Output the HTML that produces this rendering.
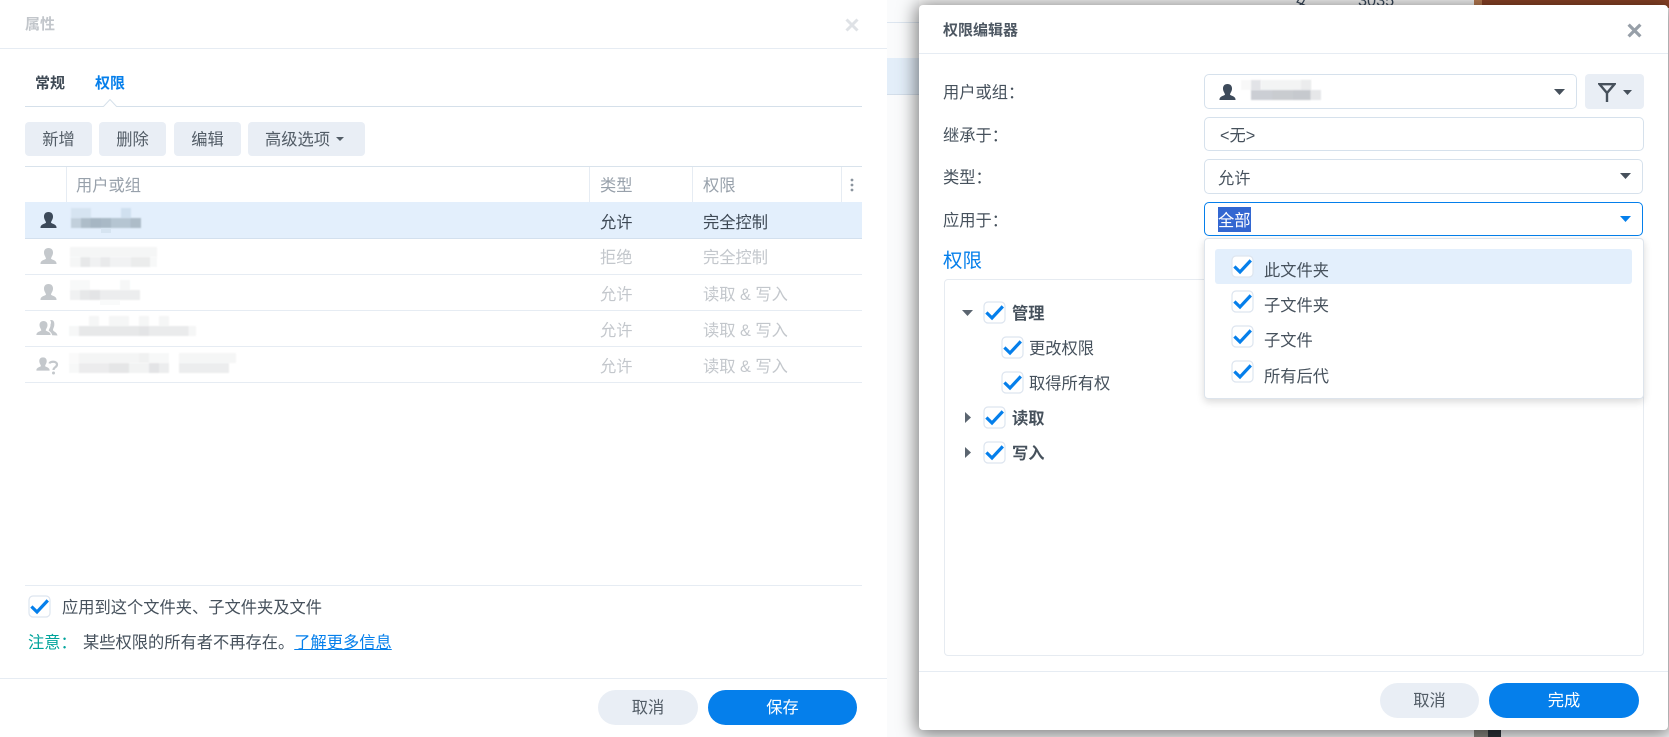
<!DOCTYPE html>
<html lang="zh-CN">
<head>
<meta charset="utf-8">
<title>权限编辑器</title>
<style>
html,body{margin:0;padding:0}
body{width:1669px;height:737px;overflow:hidden;position:relative;background:#fafbfc;font-family:"Liberation Sans","Noto Sans CJK SC",sans-serif;font-size:16.25px;color:#46515c}
div,span,svg,a{position:absolute;box-sizing:border-box}
.t{white-space:nowrap;line-height:24px;height:24px;margin-top:1px}
.dis{color:#c3c7cc}
.hd{color:#98a1ab}
.btn{background:#e9eef5;border-radius:4px;text-align:center;color:#525c66;line-height:36px;height:34px;top:122px}
.ln{background:#e6ecf3;height:1px}
.pill{border-radius:18px;text-align:center;line-height:36px;height:35px}
.gr{background:#e9eef5;color:#525c66}
.bl{background:#057feb;color:#fff}
.fld{border:1px solid #d6e1ec;border-radius:5px;background:#fff}
.cb{width:23px;height:23px}
.b{font-weight:700}
.bk{height:10px;filter:blur(.7px)}
</style>
</head>
<body>
<svg width="0" height="0" style="left:0;top:0">
<defs>
<symbol id="c" viewBox="0 0 23 23">
<rect x="1" y="1" width="21" height="21" rx="4" fill="#fff" stroke="#dde5ef" stroke-width="1.2"/>
<path d="M3.400 11.500L9 17 19.800 5.400" fill="none" stroke="#057feb" stroke-width="3.200"/>
</symbol>
<symbol id="p" viewBox="0 0 17 16">
<path d="M8.500 0C5.500 0 3.800 2 4 5 4.200 7.500 5.500 8.500 6 10.500 6 11.500 1 12 .5 15V16h16v-1C16 12 11 11.500 11 10.500 11.500 8.500 12.800 7.500 13 5 13.200 2 11.500 0 8.500 0Z"/>
</symbol>
</defs>
</svg>

<!-- underlying window -->
<div style="left:887px;top:22px;width:40px;height:1px;background:#dde6f0"></div>
<div style="left:887px;top:58px;width:40px;height:37px;background:#e3eef9;border-bottom:1px solid #d3deea"></div>
<div style="left:919px;top:0;width:555px;height:8px;background:#fff"></div>
<span class="t" style="left:1293px;top:-12px;color:#3a4a5c">安</span>
<span class="t" style="left:1358px;top:-12px;color:#3a4a5c">3035</span>
<div style="left:1474px;top:0;width:195px;height:8px;background:#8f4527"></div>
<div style="left:1474px;top:0;width:8px;height:8px;background:#c08055"></div>
<div style="left:1474px;top:728px;width:14px;height:9px;background:#8a8a82"></div>
<div style="left:1488px;top:728px;width:13px;height:9px;background:#2b3339"></div>

<!-- modal -->
<div style="left:919px;top:5px;width:749px;height:725px;background:#fff;border-radius:4px;box-shadow:0 2px 18px 3px rgba(0,0,0,.5)"></div>

<!-- left panel -->
<div style="left:0;top:0;width:887px;height:737px;background:#fff;z-index:1">
 <span class="t b" style="left:25px;top:12px;font-size:15px;color:#c2c6cb">属性</span>
 <svg style="left:845px;top:18px" width="14" height="14" viewBox="0 0 14 14"><path d="M1.500 1.500L12.500 12.500M12.500 1.500L1.500 12.500" stroke="#dfe2e6" stroke-width="3"/></svg>
 <div class="ln" style="left:0;top:48px;width:887px;height:1px"></div>

 <span class="t b" style="left:35px;top:71px;font-size:15px;color:#3f4a55">常规</span>
 <span class="t b" style="left:95px;top:71px;font-size:15px;color:#057feb">权限</span>
 <div style="left:25px;top:106px;width:837px;height:1px;background:#d5e0ea"></div>
 <svg style="left:103px;top:99px" width="14" height="8" viewBox="0 0 14 8"><path d="M0 8L7 .5 14 8" fill="#fff" stroke="#d5e0ea"/><path d="M1 7.500h12v1H1z" fill="#fff"/></svg>

 <div class="btn" style="left:25px;width:67px">新增</div>
 <div class="btn" style="left:99px;width:67px">删除</div>
 <div class="btn" style="left:174px;width:67px">编辑</div>
 <div class="btn" style="left:248px;width:117px;text-align:left;padding-left:17px">高级选项</div>
 <svg style="left:336px;top:137px" width="8" height="4"><path d="M0 0h8L4 4z" fill="#525c66"/></svg>

 <!-- table -->
 <div style="left:25px;top:166px;width:837px;height:1px;background:#d9e3ec"></div>
 <div class="ln" style="left:66px;top:167px;width:1px;height:35px"></div>
 <div class="ln" style="left:589px;top:167px;width:1px;height:35px"></div>
 <div class="ln" style="left:692px;top:167px;width:1px;height:35px"></div>
 <div class="ln" style="left:841px;top:167px;width:1px;height:35px"></div>
 <span class="t hd" style="left:76px;top:173px">用户或组</span>
 <span class="t hd" style="left:600px;top:173px">类型</span>
 <span class="t hd" style="left:703px;top:173px">权限</span>
 <svg style="left:850px;top:177px" width="4" height="16"><circle cx="2" cy="3" r="1.400" fill="#8b949e"/><circle cx="2" cy="8" r="1.400" fill="#8b949e"/><circle cx="2" cy="13" r="1.400" fill="#8b949e"/></svg>

 <div style="left:25px;top:202px;width:837px;height:37px;background:#e3effc;border-bottom:1px solid #d3e0ee"></div>
 <div class="ln" style="left:25px;top:274px;width:837px"></div>
 <div class="ln" style="left:25px;top:310px;width:837px"></div>
 <div class="ln" style="left:25px;top:346px;width:837px"></div>
 <div class="ln" style="left:25px;top:382px;width:837px"></div>

 <svg style="left:40px;top:212px" width="17" height="16" fill="#3d4a5a"><use href="#p"/></svg>
 <svg style="left:40px;top:248px" width="17" height="16" fill="#c4c8cc"><use href="#p"/></svg>
 <svg style="left:40px;top:284px" width="17" height="16" fill="#c4c8cc"><use href="#p"/></svg>
 <svg style="left:36px;top:320px" width="22" height="16" fill="#c4c8cc"><use href="#p" x="0" width="15" height="16"/><path d="M15 0c3 0 3.500 2.500 3.300 5-.2 2.500-1.300 3.500-1.300 5 0 1.500 4 2 4.500 5.500l-5.300-.3c-.5-2.500-2.500-3.700-3.500-4.700.5-2 2-3.500 1.800-6C15.400 3 15 1 14 .3z"/></svg>
 <svg style="left:36px;top:356px" width="23" height="19" fill="#c4c8cc"><use href="#p" x="0" width="14" height="16"/><path d="M13.500 7.500c.5-2.500 7.500-2.500 7.500 1 0 3-3.500 2.500-3.500 5.500" fill="none" stroke="#c4c8cc" stroke-width="2.200"/><circle cx="17.500" cy="17" r="1.500"/></svg>

 <!-- blurred names -->
 <div class="bk" style="left:71px;top:208px;width:20px;background:#d6e4f1"></div>
 <div class="bk" style="left:121px;top:208px;width:10px;background:#d0e0ef"></div>
 <div class="bk" style="left:71px;top:218px;width:70px;background:linear-gradient(90deg,#c2d0dc 0 14%,#aebdc9 14% 28%,#a6b6c3 28% 43%,#a9b9c6 43% 57%,#b5c5d2 57% 85%,#adbcc8 85%)"></div>
 <div style="left:101px;top:228px;width:10px;height:5px;background:#d6e4f1"></div>

 <div class="bk" style="left:70px;top:247px;width:87px;background:#f5f6f6"></div>
 <div class="bk" style="left:70px;top:257px;width:87px;background:linear-gradient(90deg,#f5f6f6 0 12%,#e7e8e9 12% 23%,#f0f1f2 23% 35%,#e9eaeb 35% 46%,#f1f2f3 46% 70%,#ebecec 70% 92%,#f7f8f8 92%)"></div>

 <div class="bk" style="left:70px;top:280px;width:20px;background:#f8f9f9"></div>
 <div class="bk" style="left:120px;top:280px;width:10px;background:#f6f7f7"></div>
 <div class="bk" style="left:70px;top:290px;width:70px;background:linear-gradient(90deg,#f0f1f2 0 14%,#e7e8e9 14% 28%,#e3e4e6 28% 43%,#ecedee 43% 100%)"></div>
 <div style="left:100px;top:300px;width:20px;height:5px;background:#f9fafa"></div>

 <div class="bk" style="left:89px;top:316px;width:10px;background:#f5f6f6"></div>
 <div class="bk" style="left:109px;top:316px;width:20px;background:#f5f6f6"></div>
 <div class="bk" style="left:139px;top:316px;width:10px;background:#f5f6f6"></div>
 <div class="bk" style="left:159px;top:316px;width:10px;background:#f5f6f6"></div>
 <div class="bk" style="left:69px;top:326px;width:127px;background:linear-gradient(90deg,#f6f7f7 0 8%,#e7e8e9 8% 55%,#e3e4e6 55% 63%,#eaebec 63% 94%,#f5f6f6 94%)"></div>

 <div class="bk" style="left:69px;top:353px;width:100px;background:linear-gradient(90deg,#fafafa 0 10%,#f4f5f5 10% 70%,#f0f1f1 70% 80%,#f7f8f8 80%)"></div>
 <div class="bk" style="left:179px;top:353px;width:57px;background:#f5f6f6"></div>
 <div class="bk" style="left:69px;top:363px;width:100px;background:linear-gradient(90deg,#f7f8f8 0 10%,#ececed 10% 40%,#e5e6e7 40% 60%,#f2f3f3 60% 80%,#e3e4e6 80% 90%,#ecedee 90%)"></div>
 <div class="bk" style="left:179px;top:363px;width:50px;background:#ecedee"></div>

 <span class="t" style="left:600px;top:210px;color:#3d4854">允许</span>
 <span class="t" style="left:703px;top:210px;color:#3d4854">完全控制</span>
 <span class="t dis" style="left:600px;top:245px">拒绝</span>
 <span class="t dis" style="left:703px;top:245px">完全控制</span>
 <span class="t dis" style="left:600px;top:282px">允许</span>
 <span class="t dis" style="left:703px;top:282px">读取 &amp; 写入</span>
 <span class="t dis" style="left:600px;top:318px">允许</span>
 <span class="t dis" style="left:703px;top:318px">读取 &amp; 写入</span>
 <span class="t dis" style="left:600px;top:354px">允许</span>
 <span class="t dis" style="left:703px;top:354px">读取 &amp; 写入</span>

 <!-- bottom -->
 <div class="ln" style="left:25px;top:585px;width:837px"></div>
 <svg class="cb" style="left:28px;top:595px"><use href="#c"/></svg>
 <span class="t" style="left:62px;top:595px">应用到这个文件夹、子文件夹及文件</span>
 <span class="t" style="left:28px;top:630px;color:#00a39b">注意：</span>
 <span class="t" style="left:83px;top:630px">某些权限的所有者不再存在。<span style="position:static;color:#057feb;text-decoration:underline">了解更多信息</span></span>

 <div class="ln" style="left:0;top:678px;width:887px"></div>
 <div class="pill gr" style="left:598px;top:690px;width:100px">取消</div>
 <div class="pill bl" style="left:708px;top:690px;width:149px">保存</div>
</div>

<!-- modal content -->
<div style="left:0;top:0;width:1669px;height:737px;z-index:2">
 <span class="t b" style="left:943px;top:18px;font-size:15px;color:#4d5762">权限编辑器</span>
 <svg style="left:1627px;top:23px" width="15" height="15" viewBox="0 0 14 14"><path d="M1.500 1.500L12.500 12.500M12.500 1.500L1.500 12.500" stroke="#979fa8" stroke-width="3"/></svg>
 <div class="ln" style="left:919px;top:53px;width:749px"></div>

 <span class="t" style="left:943px;top:80px">用户或组：</span>
 <span class="t" style="left:943px;top:123px">继承于：</span>
 <span class="t" style="left:943px;top:165px">类型：</span>
 <span class="t" style="left:943px;top:208px">应用于：</span>

 <div class="fld" style="left:1204px;top:74px;width:373px;height:35px"></div>
 <svg style="left:1219px;top:84px" width="17" height="16" fill="#3d4a5a"><use href="#p"/></svg>
 <div class="bk" style="left:1241px;top:80px;width:10px;background:#f8f8f8"></div>
 <div class="bk" style="left:1251px;top:80px;width:10px;background:#e2e3e7"></div>
 <div class="bk" style="left:1261px;top:80px;width:50px;background:#f3f4f4"></div>
 <div class="bk" style="left:1301px;top:80px;width:10px;background:#ebeced"></div>
 <div class="bk" style="left:1251px;top:90px;width:70px;background:linear-gradient(90deg,#cbced4 0 30%,#c9ccd0 30% 60%,#c6c9ce 60% 85%,#e6e7e9 85%)"></div>
 <svg style="left:1554px;top:89px" width="11" height="6"><path d="M0 0h11L5.500 6z" fill="#46505b"/></svg>

 <div style="left:1585px;top:74px;width:59px;height:35px;background:#e9eef5;border-radius:4px"></div>
 <svg style="left:1598px;top:83px" width="18" height="19" viewBox="0 0 18 19"><path d="M1.500 1.200h15L9 10zM9 9v10" fill="none" stroke="#46505b" stroke-width="2.400"/></svg>
 <svg style="left:1623px;top:90px" width="9" height="5"><path d="M0 0h9L4.500 5z" fill="#46505b"/></svg>

 <div class="fld" style="left:1204px;top:117px;width:440px;height:34px"></div>
 <span class="t" style="left:1220px;top:123px">&lt;无&gt;</span>

 <div class="fld" style="left:1204px;top:159px;width:439px;height:35px"></div>
 <span class="t" style="left:1218px;top:166px">允许</span>
 <svg style="left:1620px;top:173px" width="11" height="6"><path d="M0 0h11L5.500 6z" fill="#46505b"/></svg>

 <div class="fld" style="left:1204px;top:202px;width:439px;height:34px;border-color:#057feb"></div>
 <div style="left:1218px;top:207px;width:33px;height:25px;background:#3367d1"></div>
 <span class="t" style="left:1218px;top:208px;color:#fff">全部</span>
 <svg style="left:1620px;top:216px" width="11" height="6"><path d="M0 0h11L5.500 6z" fill="#057feb"/></svg>

 <span class="t" style="left:943px;top:248px;font-size:19.500px;color:#057feb">权限</span>
 <div style="left:944px;top:279px;width:700px;height:377px;border:1px solid #e6ebf1;border-radius:4px"></div>

 <svg style="left:962px;top:310px" width="11" height="6"><path d="M0 0h11L5.500 6z" fill="#5b6570"/></svg>
 <svg class="cb" style="left:983px;top:301px"><use href="#c"/></svg>
 <span class="t b" style="left:1012px;top:301px">管理</span>
 <svg class="cb" style="left:1001px;top:336px"><use href="#c"/></svg>
 <span class="t" style="left:1029px;top:336px">更改权限</span>
 <svg class="cb" style="left:1001px;top:371px"><use href="#c"/></svg>
 <span class="t" style="left:1029px;top:371px">取得所有权</span>
 <svg style="left:965px;top:412px" width="6" height="11"><path d="M0 0v11l6-5.500z" fill="#5b6570"/></svg>
 <svg class="cb" style="left:983px;top:406px"><use href="#c"/></svg>
 <span class="t b" style="left:1012px;top:406px">读取</span>
 <svg style="left:965px;top:447px" width="6" height="11"><path d="M0 0v11l6-5.500z" fill="#5b6570"/></svg>
 <svg class="cb" style="left:983px;top:441px"><use href="#c"/></svg>
 <span class="t b" style="left:1012px;top:441px">写入</span>

 <!-- dropdown -->
 <div style="left:1204px;top:238px;width:440px;height:161px;background:#fff;border:1px solid #dde4ec;border-radius:4px;box-shadow:0 3px 8px rgba(0,0,0,.15)"></div>
 <div style="left:1215px;top:249px;width:417px;height:35px;background:#e3effc;border-radius:3px"></div>
 <svg class="cb" style="left:1231px;top:255px"><use href="#c"/></svg>
 <span class="t" style="left:1264px;top:258px">此文件夹</span>
 <svg class="cb" style="left:1231px;top:290px"><use href="#c"/></svg>
 <span class="t" style="left:1264px;top:293px">子文件夹</span>
 <svg class="cb" style="left:1231px;top:325px"><use href="#c"/></svg>
 <span class="t" style="left:1264px;top:328px">子文件</span>
 <svg class="cb" style="left:1231px;top:360px"><use href="#c"/></svg>
 <span class="t" style="left:1264px;top:364px">所有后代</span>

 <div class="ln" style="left:919px;top:671px;width:749px"></div>
 <div class="pill gr" style="left:1380px;top:683px;width:99px">取消</div>
 <div class="pill bl" style="left:1489px;top:683px;width:150px">完成</div>
</div>
</body>
</html>
